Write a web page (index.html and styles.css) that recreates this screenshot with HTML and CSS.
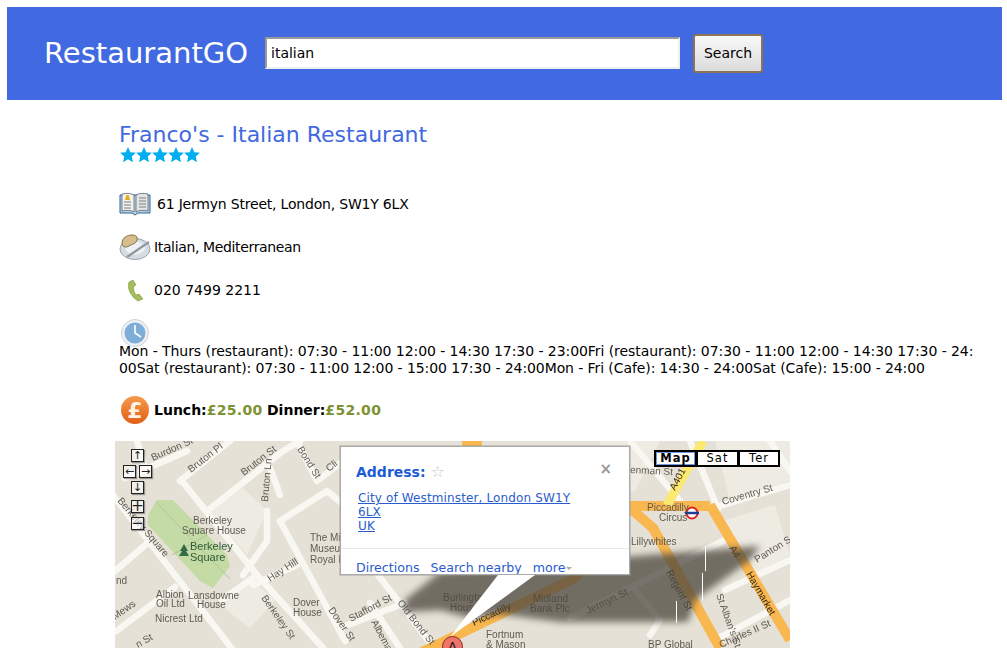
FILE: index.html
```html
<!DOCTYPE html>
<html lang="en">
<head>
  <meta charset="UTF-8" />
  <title>RestaurantGO</title>
  <link rel="stylesheet" href="styles.css">
</head>
<body>
  <header class="top-bar">
    <div class="logo">RestaurantGO</div>
    <form class="search-form">
      <input class="search-input" type="text" value="italian">
      <button class="search-button" type="button">Search</button>
    </form>
  </header>

  <main class="content">
    <h1 class="name">Franco's - Italian Restaurant</h1>
    <svg class="stars" width="80" height="16" viewBox="0 0 80 16">
      <defs>
        <path id="star" d="M8 0l2.300 5.200 5.700.6-4.300 3.800 1.300 5.600L8 12.300l-5 2.900 1.300-5.600L0 5.800l5.700-.6z" fill="#00aeef"/>
      </defs>
      <use href="#star" x="0"/>
      <use href="#star" x="16"/>
      <use href="#star" x="32"/>
      <use href="#star" x="48"/>
      <use href="#star" x="64"/>
    </svg>

    <div class="info-row address-row">
      <svg class="icon" width="32" height="24" viewBox="0 0 32 24">
        <path d="M1 3h30v18H19l-3 2-3-2H1z" fill="#bcd3e6" stroke="#2f6390"/>
        <path d="M3 2c4-1 9-1 12 1v17c-3-2-8-2-12-1z" fill="#f3f1ea" stroke="#55677a" stroke-width=".8"/>
        <path d="M29 2c-4-1-9-1-12 1v17c3-2 8-2 12-1z" fill="#e4e5e3" stroke="#55677a" stroke-width=".8"/>
        <path d="M6 8l1.500-5h2L11 8z" fill="#e8a818"/>
        <path d="M5 10h7M5 13h7M5 16h7M20 6h7M20 9h7M20 12h7M20 15h7" stroke="#77808a" stroke-width="1.200"/>
      </svg>
      <span class="address-text">61 Jermyn Street, London, SW1Y 6LX</span>
    </div>

    <div class="info-row cuisine-row">
      <svg class="icon" width="32" height="26" viewBox="0 0 32 26">
        <ellipse cx="16" cy="15" rx="15" ry="10.500" fill="#d5dce3" stroke="#9aa5ae"/>
        <ellipse cx="16" cy="14" rx="10" ry="6.500" fill="#eef1f4"/>
        <path d="M3 9c0-5 5-8 10-8 4 0 6 2 5 5-1 4-5 4-8 6-3 2-7 1-7-3z" fill="#d6bd8c" stroke="#6d5530" stroke-width=".8"/>
        <path d="M8 23L30 8" stroke="#8d979f" stroke-width="2.200"/>
      </svg>
      <span class="cuisine-text">Italian, Mediterranean</span>
    </div>

    <div class="info-row phone-row">
      <svg class="icon" width="18" height="23" viewBox="0 0 18 23">
        <path d="M6 1L2 3C0 9 3 17 11 22l5-2-4-5-3 1C7 13 6 10 7 7l2-1z" fill="#a3bd5e" stroke="#7d9a3c" stroke-width=".6"/>
      </svg>
      <span>020 7499 2211</span>
    </div>

    <div class="hours">
      <svg class="icon" width="28" height="28" viewBox="0 0 28 28">
        <circle cx="14" cy="14" r="13.500" fill="#eef0f3" stroke="#ccd2d8"/>
        <circle cx="14" cy="14" r="10.500" fill="#7eaed8"/>
        <path d="M14 6v8l6 4" fill="none" stroke="#fff" stroke-width="1.600"/>
      </svg>
      <p class="hours-text">Mon - Thurs (restaurant): 07:30 - 11:00 12:00 - 14:30 17:30 - 23:00Fri (restaurant): 07:30 - 11:00 12:00 - 14:30 17:30 - 24:<br><span class="hours-second">00Sat (restaurant): 07:30 - 11:00 12:00 - 15:00 17:30 - 24:00Mon - Fri (Cafe): 14:30 - 24:00Sat (Cafe): 15:00 - 24:00</span></p>
    </div>

    <div class="info-row price-row">
      <svg class="icon" width="30" height="30" viewBox="0 0 30 30">
        <defs>
          <linearGradient id="coin" x1="0" y1="0" x2="0" y2="1">
            <stop offset="0" stop-color="#f59a4c"/>
            <stop offset="1" stop-color="#e25f16"/>
          </linearGradient>
        </defs>
        <circle cx="15" cy="15" r="14" fill="url(#coin)"/>
        <text x="15" y="23" text-anchor="middle" class="coin-text">£</text>
      </svg>
      <b>Lunch:</b><b class="price">£25.00</b>&nbsp;<b>Dinner:</b><b class="price">£52.00</b>
    </div>
  </main>

  <section class="map">
    <svg class="map-canvas" width="675" height="207" viewBox="115 441 675 207">
      <rect x="115" y="441" width="675" height="207" fill="#e5e1d6"/>

      <!-- lighter building blocks -->
      <g fill="#eeebe2">
        <path d="M210 511l33-23 24 23-20 44z"/>
        <path d="M220 605l33-24 22 19-25 28z"/>
        <path d="M600 441h60l-25 50-40 10z"/>
        <path d="M715 441h75v40l-60 20z"/>
        <path d="M725 520l50-15 15 50-40 30z"/>
      </g>

      <!-- park -->
      <path d="M148 515l9-15h16l54 55 3 11-17 22-13-7-52-56z" fill="#c5dba5"/>
      <path d="M156 502l74 77M172 555l35-20" stroke="#b2c497" fill="none"/>
      <path d="M184 544l-4 7h2l-3 5h10l-3-5h2z" fill="#356b47"/>

      <!-- streets -->
      <g fill="none" stroke="#f8f7f2" stroke-width="6.500" stroke-linejoin="round" stroke-linecap="round">
        <path d="M113 495l120 155"/>
        <path d="M182 481l75 94 66 73"/>
        <path d="M180 481l50-40"/>
        <path d="M137 441l9 30"/>
        <path d="M125 478l62-27"/>
        <path d="M207 511l76-60 17-10"/>
        <path d="M297 441l20 40 26-20"/>
        <path d="M270 468l10 27"/>
        <path d="M267 511v30l-24 34"/>
        <path d="M115 571l35-30"/>
        <path d="M115 632l60-45"/>
        <path d="M253 585l44-20"/>
        <path d="M280 521l47-30 23 19"/>
        <path d="M280 521l65 120"/>
        <path d="M222 600l35-25"/>
        <path d="M378 575l54 70"/>
        <path d="M340 628l65-25"/>
        <path d="M370 603l30 45"/>
        <path d="M570 618l153-77"/>
        <path d="M713 508l77-23"/>
        <path d="M690 441l28 68"/>
        <path d="M770 441l20 30"/>
        <path d="M725 590l65-30"/>
        <path d="M630 441l50 60"/>
        <path d="M715 640l75-40"/>
        <path d="M635 590l25 30-10 15"/>
      </g>

      <!-- main roads -->
      <g fill="none" stroke="#f9b74f" stroke-width="10" stroke-linejoin="round">
        <path d="M422 652l153-74 55-72h80"/>
        <path d="M630 508l23 20 67 120"/>
        <path d="M710 505l80 135"/>
        <path d="M462 441h20"/>
      </g>
      <path d="M703 441l-36 64" fill="none" stroke="#fce971" stroke-width="9"/>

      <!-- underground roundel -->
      <circle cx="692" cy="513" r="5.500" fill="#fff" stroke="#d22" stroke-width="2"/>
      <path d="M685 513h14" stroke="#1c3f94" stroke-width="2.500"/>

      <!-- labels -->
      <g class="map-label">
        <text x="153" y="461" transform="rotate(-24 153 461)">Burdon St</text>
        <text x="191" y="473" transform="rotate(-38 191 473)">Bruton Pl</text>
        <text x="244" y="476" transform="rotate(-38 244 476)">Bruton St</text>
        <text x="297" y="449" transform="rotate(58 297 449)">Bond St</text>
        <text x="329" y="472" transform="rotate(-38 329 472)">Cli</text>
        <text x="268" y="502" transform="rotate(-85 268 502)">Bruton Ln</text>
        <text x="117" y="501" transform="rotate(50 117 501)">Berkeley Square</text>
        <text x="193" y="524">Berkeley</text>
        <text x="182" y="534">Square House</text>
        <text x="190" y="550" class="park-label">Berkeley</text>
        <text x="190" y="561" class="park-label">Square</text>
        <text x="310" y="541">The Mi</text>
        <text x="310" y="552">Museun</text>
        <text x="310" y="563">Royal In</text>
        <text x="270" y="582" transform="rotate(-33 270 582)">Hay Hill</text>
        <text x="156" y="598">Albion</text>
        <text x="156" y="607">Oil Ltd</text>
        <text x="188" y="599">Lansdowne</text>
        <text x="197" y="608">House</text>
        <text x="155" y="622">Nicrest Ltd</text>
        <text x="293" y="606">Dover</text>
        <text x="293" y="616">House</text>
        <text x="261" y="598" transform="rotate(55 261 598)">Berkeley St</text>
        <text x="328" y="610" transform="rotate(55 328 610)">Dover St</text>
        <text x="116" y="584">nd</text>
        <text x="115" y="620" transform="rotate(-35 115 620)">Mews</text>
        <text x="138" y="648" transform="rotate(-30 138 648)">n St</text>
        <text x="351" y="622" transform="rotate(-28 351 622)">Stafford St</text>
        <text x="397" y="603" transform="rotate(52 397 603)">Old Bond St</text>
        <text x="371" y="622" transform="rotate(62 371 622)">Albemarle</text>
        <text x="443" y="601">Burlington</text>
        <text x="450" y="611">House</text>
        <text x="533" y="602">Midland</text>
        <text x="530" y="612">Bank Plc</text>
        <text x="486" y="638">Fortnum</text>
        <text x="486" y="648">&amp; Mason</text>
        <text x="474" y="626" transform="rotate(-25 474 626)" class="dark-label">Piccadilly</text>
        <text x="588" y="614" transform="rotate(-26 588 614)">Jermyn St</text>
        <text x="630" y="473" transform="rotate(3 630 473)">enman St</text>
        <text x="675" y="491" transform="rotate(-62 675 491)" class="dark-label">A401</text>
        <text x="647" y="511">Piccadilly</text>
        <text x="659" y="521">Circus</text>
        <text x="631" y="545">Lillywhites</text>
        <text x="723" y="505" transform="rotate(-16 723 505)">Coventry St</text>
        <text x="757" y="563" transform="rotate(-32 757 563)">Panton S</text>
        <text x="729" y="548" transform="rotate(60 729 548)" class="dark-label">A4</text>
        <text x="746" y="574" transform="rotate(60 746 574)" class="dark-label">Haymarket</text>
        <text x="666" y="572" transform="rotate(62 666 572)" class="dark-label">Regent St</text>
        <text x="716" y="595" transform="rotate(70 716 595)">St Alban's St</text>
        <text x="721" y="648" transform="rotate(-24 721 648)">Charles II St</text>
        <text x="648" y="648">BP Global</text>
      </g>

      <!-- info window shadow -->
      <defs>
        <filter id="soft" x="-10%" y="-30%" width="120%" height="160%">
          <feGaussianBlur stdDeviation="3.500"/>
        </filter>
      </defs>
      <path d="M405 600l35-28 320-26-10 14-55 40-7 22H560l-60-8-30 4-30-8-35 2z" fill="#4f4a41" opacity=".76" filter="url(#soft)"/>
      <path d="M705.500 546v25M702.500 573v28M676.500 601v22" stroke="#fff"/>
    </svg>

    <div class="pan-control">
      <span class="map-btn pan-up">↑</span>
      <span class="map-btn pan-left">←</span>
      <span class="map-btn pan-right">→</span>
      <span class="map-btn pan-down">↓</span>
      <span class="map-btn zoom-in">+</span>
      <span class="map-btn zoom-out">−</span>
    </div>

    <div class="map-types">
      <span class="map-type map-type-on">Map</span>
      <span class="map-type">Sat</span>
      <span class="map-type">Ter</span>
    </div>

    <div class="bubble">
      <span class="bubble-close">×</span>
      <div class="bubble-title">Address: <span class="bubble-star">☆</span></div>
      <div class="bubble-address">
        <a href="#">City of Westminster, London SW1Y</a><br>
        <a href="#">6LX</a><br>
        <a href="#">UK</a>
      </div>
      <div class="bubble-links">
        <span>Directions</span>
        <span>Search nearby</span>
        <span>more<i class="more-arrow"></i></span>
      </div>
    </div>
    <svg class="bubble-tail" width="90" height="62" viewBox="0 0 90 62">
      <path d="M48 0L0 62 85 0z" fill="#fff"/>
    </svg>
    <div class="marker">A</div>
  </section>
</body>
</html>
```

FILE: styles.css
```css
* {
  box-sizing: border-box;
}

html, body {
  height: 648px;
  overflow: hidden;
}

body {
  margin: 0;
  padding: 7px 5px 0 7px;
  background: #fff;
  color: #000;
  font-family: "DejaVu Sans", sans-serif;
  font-size: 14px;
  line-height: 17px;
}

.top-bar {
  display: flex;
  align-items: center;
  height: 93px;
  padding: 0 0 1px 37px;
  background: #4169e1;
}

.logo {
  width: 221px;
  color: #fff;
  font-size: 29px;
  line-height: 34px;
}

.search-form {
  display: flex;
  align-items: center;
  gap: 13px;
}

.search-input {
  width: 415px;
  height: 32px;
  margin-top: -1px;
  padding: 0 4px;
  border: 2px solid;
  border-color: #999 #eee #eee #999;
  background: #fff;
  color: #000;
  font-family: "DejaVu Sans", sans-serif;
  font-size: 14px;
}

.search-button {
  width: 70px;
  height: 39px;
  padding: 0;
  border: 2px solid #8b7355;
  border-radius: 3px;
  background: linear-gradient(#f8f8f8, #dcdcdc);
  color: #000;
  font-family: "DejaVu Sans", sans-serif;
  font-size: 14px;
}

.content {
  margin-left: 112px;
}

.name {
  margin: 22px 0 -1px;
  color: #4169e1;
  font-size: 22px;
  font-weight: normal;
  line-height: 26px;
}

.stars {
  display: block;
  margin-left: 1px;
}

.info-row {
  display: flex;
  align-items: center;
}

.address-row {
  margin-top: 29px;
  gap: 6px;
}

.address-text {
  letter-spacing: -.2px;
}

.cuisine-row {
  margin-top: 18px;
  gap: 3px;
}

.cuisine-text {
  letter-spacing: -.36px;
}

.phone-row {
  margin-top: 19px;
  padding-left: 8px;
  gap: 9px;
}

.hours {
  margin-top: 17px;
}

.hours .icon {
  display: block;
  margin-left: 2px;
}

.hours-text {
  margin: -4px 0 0;
  letter-spacing: -.065px;
  white-space: nowrap;
}

.hours-second {
  letter-spacing: -.09px;
}

.price-row {
  margin-top: 18px;
  padding-left: 1px;
  gap: 0;
  white-space: pre;
}

.price-row .icon {
  margin-right: 4px;
}

.price {
  color: #7d9233;
  letter-spacing: .3px;
}

.coin-text {
  fill: #fff3e6;
  font-family: "DejaVu Sans", sans-serif;
  font-size: 22px;
  font-weight: bold;
}

.map {
  position: relative;
  width: 675px;
  height: 207px;
  margin: 16px 0 0 108px;
  overflow: hidden;
}

.map-canvas {
  display: block;
  filter: blur(.3px);
}

.map-label {
  fill: #5f5b52;
  font-family: "Liberation Sans", sans-serif;
  font-size: 10px;
}

.map-label .park-label {
  fill: #2f5a35;
  font-size: 11px;
}

.map-label .dark-label {
  fill: #33291a;
  font-size: 10px;
}

/* pan and zoom buttons */
.pan-control {
  position: absolute;
  left: 8px;
  top: 8px;
  display: grid;
  grid-template-columns: 13px 3px 13px;
  grid-template-rows: 13px 3px 13px 3px 13px 6px 13px 4px 13px;
  width: 29px;
}

.map-btn {
  display: flex;
  align-items: center;
  justify-content: center;
  border: 1px solid #222;
  background: rgba(255, 255, 255, .55);
  box-shadow: 1px 1px 1px rgba(0, 0, 0, .35);
  color: #222;
  font-family: "DejaVu Sans", sans-serif;
  font-size: 11px;
  line-height: 11px;
}

.pan-up {
  grid-area: 1 / 1 / 2 / 4;
  width: 13px;
  justify-self: center;
}

.pan-left {
  grid-area: 3 / 1;
}

.pan-right {
  grid-area: 3 / 3;
}

.pan-down {
  grid-area: 5 / 1 / 6 / 4;
  width: 13px;
  justify-self: center;
}

.zoom-in {
  grid-area: 7 / 1 / 8 / 4;
  width: 13px;
  justify-self: center;
  font-size: 15px;
}

.zoom-out {
  grid-area: 9 / 1 / 10 / 4;
  width: 13px;
  justify-self: center;
  font-size: 15px;
}

/* map, satellite, terrain */
.map-types {
  position: absolute;
  left: 539px;
  top: 9px;
  display: flex;
}

.map-type {
  width: 43px;
  height: 17px;
  margin-right: -1px;
  border: 2px solid #000;
  background: #fff;
  font-size: 11.500px;
  letter-spacing: 1px;
  line-height: 13px;
  text-align: center;
}

.map-type:last-child {
  width: 42px;
}

.map-type-on {
  box-shadow: inset 0 0 0 1px #6d9ade;
  font-weight: bold;
}

/* info window */
.bubble {
  position: absolute;
  left: 225px;
  top: 5px;
  width: 290px;
  height: 129px;
  overflow: hidden;
  border: 1px solid #aaa;
  box-shadow: 0 0 0 1px rgba(150, 150, 150, .4);
  background: #fff;
}

.bubble-close {
  position: absolute;
  right: 17px;
  top: 12px;
  color: #999;
  font-size: 15px;
  font-weight: bold;
  line-height: 20px;
}

.bubble-title {
  position: absolute;
  left: 15px;
  top: 16px;
  color: #1c5bd6;
  font-size: 14px;
  font-weight: bold;
}

.bubble-star {
  color: #ccc;
  font-size: 16px;
  font-weight: normal;
}

.bubble-address {
  position: absolute;
  left: 17px;
  top: 44px;
  font-size: 12px;
  letter-spacing: .13px;
  line-height: 14px;
}

.bubble-address a {
  color: #2a5dcc;
}

.bubble-links {
  position: absolute;
  left: 0;
  right: 0;
  top: 101px;
  display: flex;
  gap: 11px;
  padding: 11px 0 0 15px;
  border-top: 1px solid #ece9e1;
  color: #2a5dcc;
  font-size: 12.600px;
  line-height: 16px;
}

.more-arrow {
  display: inline-block;
  margin-left: 1px;
  border: 3px solid transparent;
  border-top-color: #aaa;
  border-bottom: 0;
  vertical-align: middle;
}

.bubble-tail {
  position: absolute;
  left: 335px;
  top: 134px;
}

.marker {
  position: absolute;
  left: 327px;
  top: 195px;
  width: 21px;
  height: 21px;
  border: 1px solid #8a2b22;
  border-radius: 50%;
  background: #f0736a;
  color: #222;
  font-size: 13px;
  line-height: 19px;
  text-align: center;
}
```
